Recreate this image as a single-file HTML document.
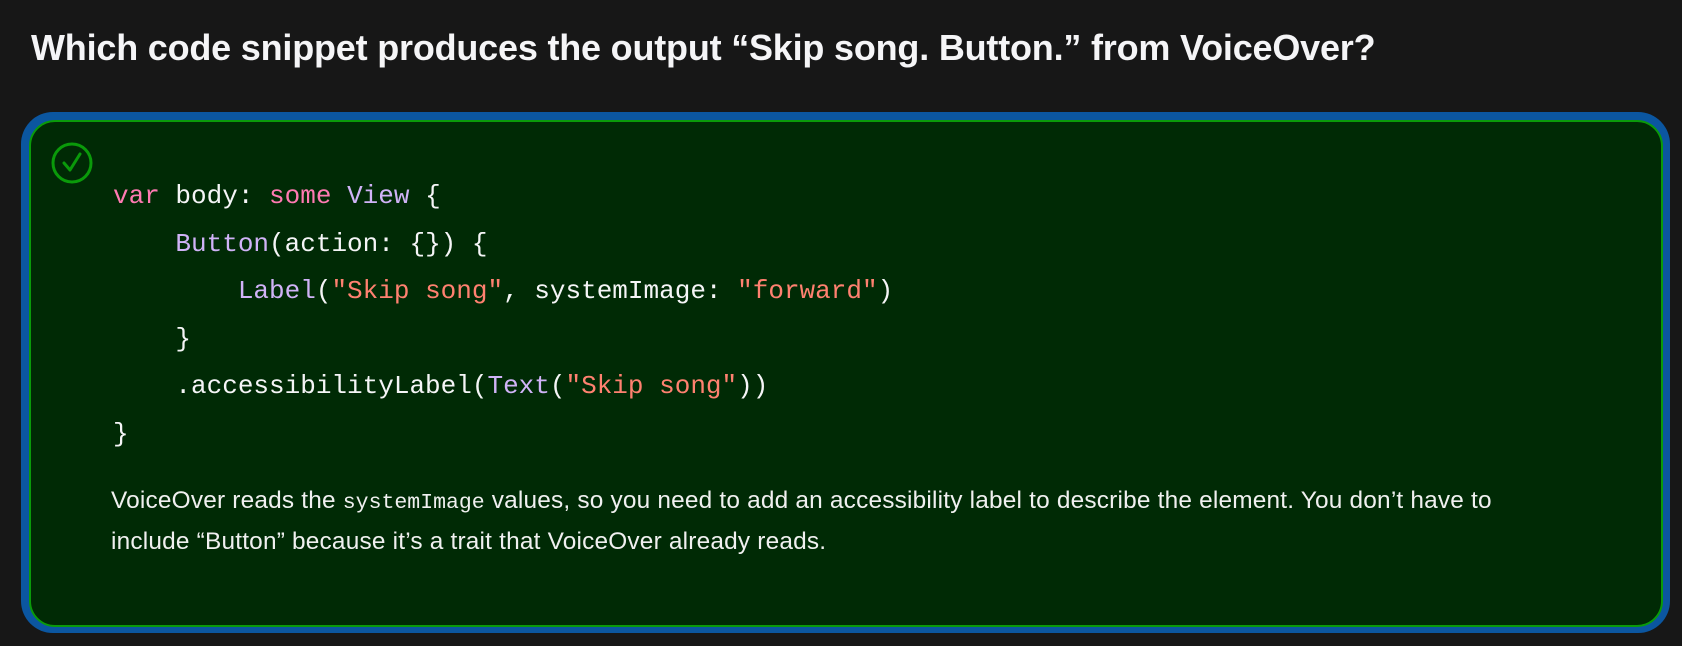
<!DOCTYPE html>
<html><head><meta charset="utf-8"><style>
html,body{margin:0;padding:0;background:#171717;width:1682px;height:646px;overflow:hidden}
.t{position:absolute;left:31px;top:24px;font:bold 36px/48px "Liberation Sans",sans-serif;color:#f5f5f7;letter-spacing:-0.2px;white-space:nowrap}
.outer{position:absolute;left:21px;top:112px;width:1649px;height:521px;background:#0b56a0;border-radius:32px}
.inner{position:absolute;left:29px;top:120px;width:1630px;height:503px;border:2px solid #0a9a0a;background:#002a05;border-radius:26px}
.chk{position:absolute;left:51px;top:142px}
.code{position:absolute;left:113px;top:173px;font:26px/47.6px "Liberation Mono",monospace;color:#f5f5f7;white-space:pre}
.k{color:#ff7ab2}.ty{color:#d0b3f7}.s{color:#ff8170}
.p{position:absolute;left:111px;top:480px;font:24.4px/41px "Liberation Sans",sans-serif;color:#f0f0f0;white-space:nowrap;letter-spacing:0.2px}
.p code{font:21.5px "Liberation Mono",monospace;letter-spacing:0}
</style></head><body>
<div class="t">Which code snippet produces the output “Skip song. Button.” from VoiceOver?</div>
<div class="outer"></div><div class="inner"></div>
<svg class="chk" width="42" height="42" viewBox="0 0 42 42"><circle cx="21" cy="21" r="19" fill="none" stroke="#0a9a0a" stroke-width="3"/><path d="M13 21 L19 28 L29 12" fill="none" stroke="#0a9a0a" stroke-width="3" stroke-linecap="round" stroke-linejoin="round"/></svg>
<div class="code"><span class="k">var</span> body: <span class="k">some</span> <span class="ty">View</span> {
    <span class="ty">Button</span>(action: {}) {
        <span class="ty">Label</span>(<span class="s">"Skip song"</span>, systemImage: <span class="s">"forward"</span>)
    }
    .accessibilityLabel(<span class="ty">Text</span>(<span class="s">"Skip song"</span>))
}</div>
<div class="p">VoiceOver reads the <code>systemImage</code> values, so you need to add an accessibility label to describe the element. You don’t have to<br>include “Button” because it’s a trait that VoiceOver already reads.</div>
</body></html>
